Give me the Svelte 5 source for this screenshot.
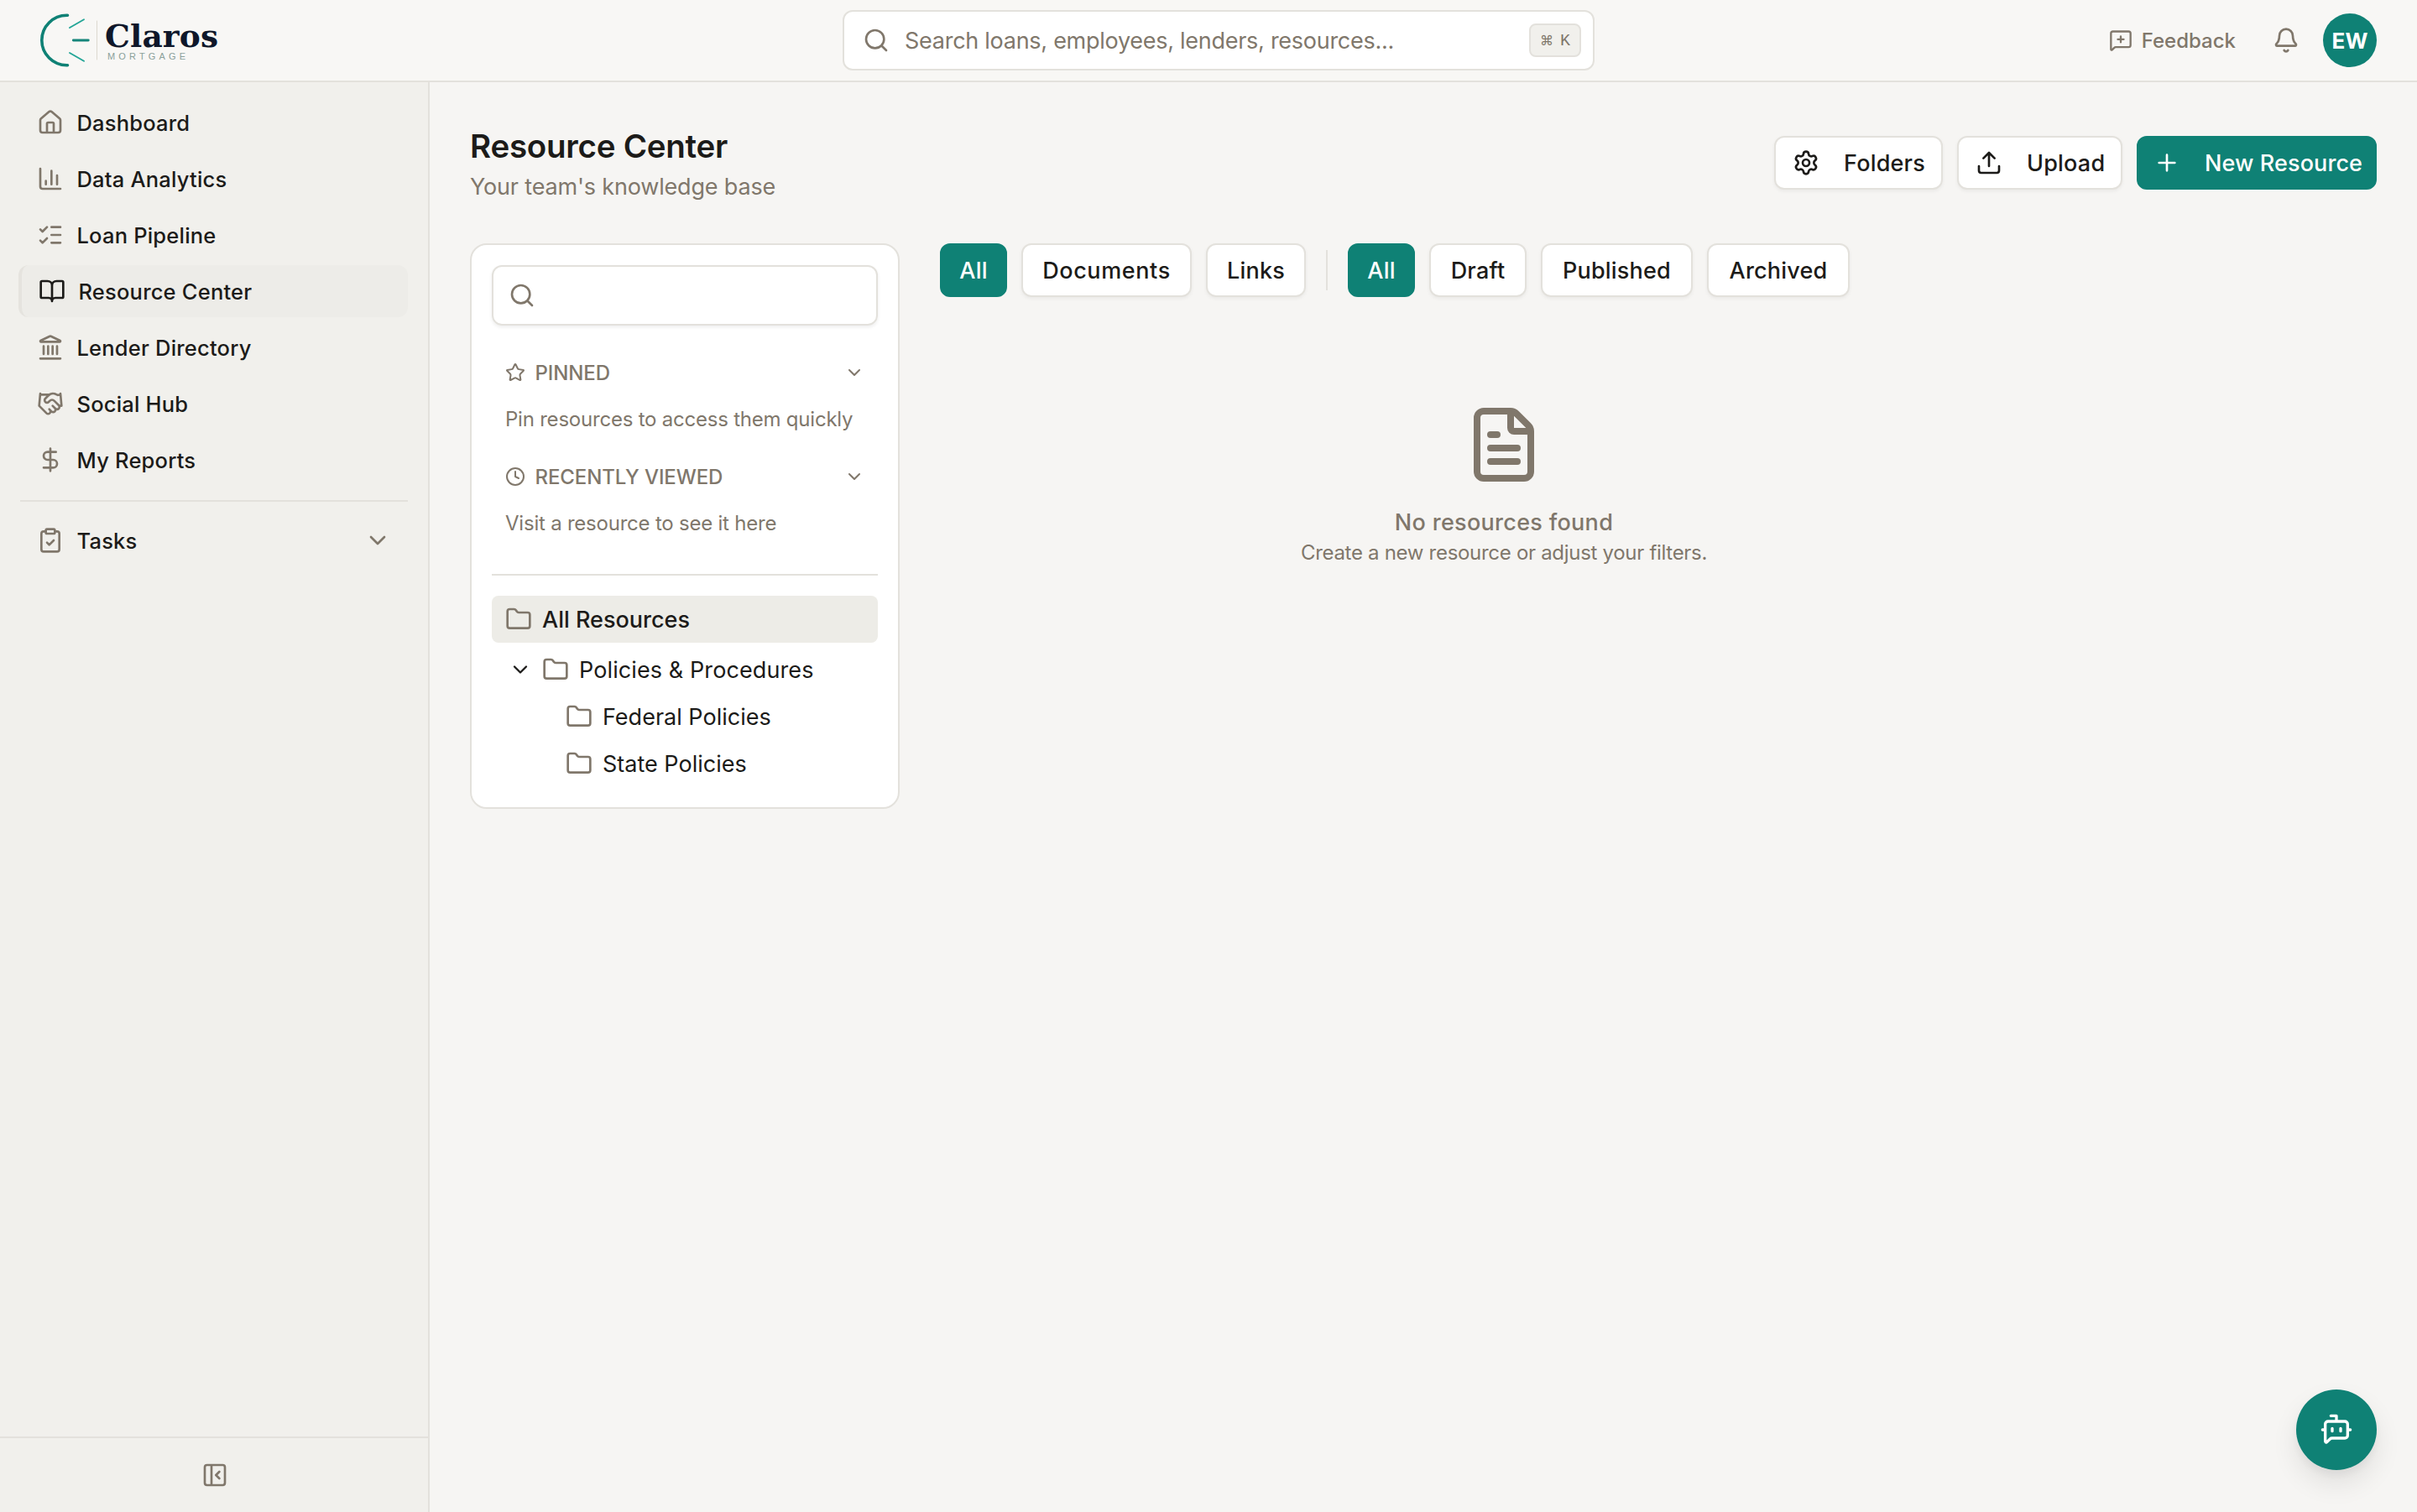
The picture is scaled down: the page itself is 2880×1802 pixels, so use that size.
<script>
  const icons = {
    home: 'M15 21v-8a1 1 0 0 0-1-1h-4a1 1 0 0 0-1 1v8M3 10a2 2 0 0 1 .709-1.528l7-5.999a2 2 0 0 1 2.582 0l7 5.999A2 2 0 0 1 21 10v9a2 2 0 0 1-2 2H5a2 2 0 0 1-2-2z',
    chart: 'M3 3v16a2 2 0 0 0 2 2h16M18 17V9M13 17V5M8 17v-3',
    checks: 'M13 5h8M13 12h8M13 19h8M3 17l2 2 4-4M3 7l2 2 4-4',
    book: 'M12 7v14M3 18a1 1 0 0 1-1-1V4a1 1 0 0 1 1-1h5a4 4 0 0 1 4 4 4 4 0 0 1 4-4h5a1 1 0 0 1 1 1v13a1 1 0 0 1-1 1h-6a3 3 0 0 0-3 3 3 3 0 0 0-3-3z',
    landmark: 'M10 18v-7M11.119 2.205a2 2 0 0 1 1.762 0l7.84 3.846A.5.5 0 0 1 20.5 7h-17a.5.5 0 0 1-.22-.949zM14 18v-7M18 18v-7M3 22h18M6 18v-7',
    handshake: 'M11 17l2 2a1 1 0 1 0 3-3M14 14l2.5 2.5a1 1 0 1 0 3-3l-3.88-3.88a3 3 0 0 0-4.24 0l-.88.88a1 1 0 1 1-3-3l2.81-2.81a5.79 5.79 0 0 1 7.06-.87l.47.28a2 2 0 0 0 1.42.25L21 4M21 3l1 11h-2M3 3L2 14l6.5 6.5a1 1 0 1 0 3-3M3 4h8',
    dollar: 'M12 2v20M17 5H9.5a3.5 3.5 0 0 0 0 7h5a3.5 3.5 0 0 1 0 7H6',
    clipboard: 'M9 2h6a1 1 0 0 1 1 1v2a1 1 0 0 1-1 1H9a1 1 0 0 1-1-1V3a1 1 0 0 1 1-1zM16 4h2a2 2 0 0 1 2 2v14a2 2 0 0 1-2 2H6a2 2 0 0 1-2-2V6a2 2 0 0 1 2-2h2M9 14l2 2 4-4',
    chevron: 'M6 9l6 6 6-6',
    panel: 'M5 3h14a2 2 0 0 1 2 2v14a2 2 0 0 1-2 2H5a2 2 0 0 1-2-2V5a2 2 0 0 1 2-2zM9 3v18M16 15l-3-3 3-3',
    search: 'M21 21l-4.34-4.34M11 3a8 8 0 1 0 0 16a8 8 0 1 0 0-16z',
    feedback: 'M22 17a2 2 0 0 1-2 2H6.828a2 2 0 0 0-1.414.586l-2.202 2.202A.71.71 0 0 1 2 21.286V5a2 2 0 0 1 2-2h16a2 2 0 0 1 2 2zM12 8v6M9 11h6',
    bell: 'M10.268 21a2 2 0 0 0 3.464 0M3.262 15.326A1 1 0 0 0 4 17h16a1 1 0 0 0 .74-1.673C19.41 13.956 18 12.499 18 8A6 6 0 0 0 6 8c0 4.499-1.411 5.956-2.738 7.326',
    settings: 'M9.671 4.136a2.34 2.34 0 0 1 4.659 0 2.34 2.34 0 0 0 3.319 1.915 2.34 2.34 0 0 1 2.33 4.033 2.34 2.34 0 0 0 0 3.831 2.34 2.34 0 0 1-2.33 4.033 2.34 2.34 0 0 0-3.319 1.915 2.34 2.34 0 0 1-4.659 0 2.34 2.34 0 0 0-3.32-1.915 2.34 2.34 0 0 1-2.33-4.033 2.34 2.34 0 0 0 0-3.831A2.34 2.34 0 0 1 6.35 6.051a2.34 2.34 0 0 0 3.319-1.915M12 9a3 3 0 1 0 0 6a3 3 0 1 0 0-6z',
    upload: 'M12 3v12M17 8l-5-5-5 5M21 15v4a2 2 0 0 1-2 2H5a2 2 0 0 1-2-2v-4',
    plus: 'M5 12h14M12 5v14',
    star: 'M11.525 2.295a.53.53 0 0 1 .95 0l2.31 4.679a2.123 2.123 0 0 0 1.595 1.16l5.166.756a.53.53 0 0 1 .294.904l-3.736 3.638a2.123 2.123 0 0 0-.611 1.878l.882 5.14a.53.53 0 0 1-.771.56l-4.618-2.428a2.122 2.122 0 0 0-1.973 0L6.396 21.01a.53.53 0 0 1-.77-.56l.881-5.139a2.122 2.122 0 0 0-.611-1.879L2.16 9.795a.53.53 0 0 1 .294-.906l5.165-.755a2.122 2.122 0 0 0 1.597-1.16z',
    clock: 'M12 2a10 10 0 1 0 0 20a10 10 0 1 0 0-20zM12 6v6l4 2',
    folder: 'M20 20a2 2 0 0 0 2-2V8a2 2 0 0 0-2-2h-7.9a2 2 0 0 1-1.69-.9L9.6 3.9A2 2 0 0 0 7.93 3H4a2 2 0 0 0-2 2v13a2 2 0 0 0 2 2Z',
    file: 'M6 22a2 2 0 0 1-2-2V4a2 2 0 0 1 2-2h8a2.4 2.4 0 0 1 1.704.706l3.588 3.588A2.4 2.4 0 0 1 20 8v12a2 2 0 0 1-2 2zM14 2v5a1 1 0 0 0 1 1h5M10 9H8M16 13H8M16 17H8',
    bot: 'M12 6V2H8M15 11v2M2 12h2M20 12h2M20 16a2 2 0 0 1-2 2H8.828a2 2 0 0 0-1.414.586l-2.202 2.202A.71.71 0 0 1 4 20.286V8a2 2 0 0 1 2-2h12a2 2 0 0 1 2 2zM9 11v2'
  };

  const navItems = [
    { label: 'Dashboard', icon: 'home' },
    { label: 'Data Analytics', icon: 'chart' },
    { label: 'Loan Pipeline', icon: 'checks' },
    { label: 'Resource Center', icon: 'book' },
    { label: 'Lender Directory', icon: 'landmark' },
    { label: 'Social Hub', icon: 'handshake' },
    { label: 'My Reports', icon: 'dollar' }
  ];

  const typeFilters = ['All', 'Documents', 'Links'];
  const statusFilters = ['All', 'Draft', 'Published', 'Archived'];

  let activeNav = $state('Resource Center');
  let activeType = $state('All');
  let activeStatus = $state('All');
  let policiesOpen = $state(true);
</script>

{#snippet icon(name, size = 32)}
  <svg class="icon" width={size} height={size} viewBox="0 0 24 24" aria-hidden="true">
    <path d={icons[name]} />
  </svg>
{/snippet}

<div class="app">
  <header class="topbar">
    <svg class="logo" width="230" height="72" viewBox="0 0 230 72" role="img" aria-label="Claros Mortgage">
      <path class="arc" d="M40.5 6.3h-1a29.7 29.7 0 0 0 0 59.4h1" />
      <path class="ray" d="M43 21l17-9.8M43 51l17 9.8" />
      <path class="ray mid" d="M47.3 36h18" />
      <path class="rule" d="M75.5 13v46" />
      <text class="brand" x="85" y="44" textLength="135">Claros</text>
      <text class="brand-sub" x="88" y="59" textLength="93">MORTGAGE</text>
    </svg>

    <div class="global-search">
      {@render icon('search')}
      <span class="placeholder">Search loans, employees, lenders, resources...</span>
      <kbd><span class="cmd">⌘</span><span>K</span></kbd>
    </div>

    <div class="user-area">
      <button class="feedback">
        {@render icon('feedback', 28)}
        <span>Feedback</span>
      </button>
      <button class="bell" aria-label="Notifications">{@render icon('bell')}</button>
      <div class="avatar">EW</div>
    </div>
  </header>

  <div class="body">
    <aside class="sidebar">
      <nav>
        {#each navItems as item}
          <button class="nav-item" class:active={activeNav === item.label} onclick={() => (activeNav = item.label)}>
            {@render icon(item.icon)}
            <span>{item.label}</span>
          </button>
        {/each}
        <hr />
        <button class="nav-item">
          {@render icon('clipboard')}
          <span class="grow">Tasks</span>
          {@render icon('chevron')}
        </button>
      </nav>
      <div class="sidebar-footer">
        <button aria-label="Collapse sidebar">{@render icon('panel')}</button>
      </div>
    </aside>

    <main>
      <div class="page-head">
        <div>
          <h1>Resource Center</h1>
          <p>Your team's knowledge base</p>
        </div>
        <div class="actions">
          <button class="btn folders">{@render icon('settings')}<span>Folders</span></button>
          <button class="btn upload">{@render icon('upload')}<span>Upload</span></button>
          <button class="btn primary create">{@render icon('plus')}<span>New Resource</span></button>
        </div>
      </div>

      <div class="columns">
        <section class="card">
          <div class="card-search">{@render icon('search')}</div>

          <div class="group">
            <div class="group-head">
              {@render icon('star', 24)}
              <span class="grow">PINNED</span>
              {@render icon('chevron', 24)}
            </div>
            <p>Pin resources to access them quickly</p>
          </div>
          <div class="group">
            <div class="group-head">
              {@render icon('clock', 24)}
              <span class="grow">RECENTLY VIEWED</span>
              {@render icon('chevron', 24)}
            </div>
            <p>Visit a resource to see it here</p>
          </div>

          <div class="tree">
            <div class="folder selected">{@render icon('folder')}<span>All Resources</span></div>
            <div class="folder parent">
              <button class="toggle" aria-label="Toggle folder" onclick={() => (policiesOpen = !policiesOpen)}>
                {@render icon('chevron', 28)}
              </button>
              {@render icon('folder')}
              <span>Policies &amp; Procedures</span>
            </div>
            {#if policiesOpen}
              <div class="folder child">{@render icon('folder')}<span>Federal Policies</span></div>
              <div class="folder child">{@render icon('folder')}<span>State Policies</span></div>
            {/if}
          </div>
        </section>

        <section class="results">
          <div class="filters">
            {#each typeFilters as f}
              <button class="btn chip {f.toLowerCase()}" class:primary={activeType === f} onclick={() => (activeType = f)}>{f}</button>
            {/each}
            <span class="sep"></span>
            {#each statusFilters as f}
              <button class="btn chip {f.toLowerCase()}" class:primary={activeStatus === f} onclick={() => (activeStatus = f)}>{f}</button>
            {/each}
          </div>
          <div class="empty">
            {@render icon('file', 96)}
            <h2>No resources found</h2>
            <p>Create a new resource or adjust your filters.</p>
          </div>
        </section>
      </div>
    </main>
  </div>

  <button class="fab" aria-label="Open assistant">{@render icon('bot', 40)}</button>
</div>

<style>
  :global(body) {
    margin: 0;
    background: #f6f5f3;
  }

  .app {
    --ink: #1c1b19;
    --muted: #80776b;
    --line: #e3e1dc;
    --teal: #0f8175;
    display: flex;
    flex-direction: column;
    width: 2880px;
    height: 1802px;
    overflow: hidden;
    background: #f6f5f3;
    color: var(--ink);
    font-family: Inter, 'Open Sans', sans-serif;
    font-size: 27px;
  }

  .app * {
    box-sizing: border-box;
  }

  button {
    margin: 0;
    padding: 0;
    border: none;
    background: none;
    color: inherit;
    font: inherit;
    letter-spacing: inherit;
    cursor: pointer;
  }

  h1,
  h2,
  p {
    margin: 0;
  }

  .icon {
    display: block;
    flex: none;
    fill: none;
    stroke: currentColor;
    stroke-width: 2;
    stroke-linecap: round;
    stroke-linejoin: round;
  }

  .grow {
    flex: 1;
    text-align: left;
  }

  /* Top bar */
  .topbar {
    display: grid;
    grid-template-columns: 964px 896px 1fr;
    align-items: center;
    flex: none;
    height: 98px;
    padding: 0 48px 0 40px;
    border-bottom: 2px solid var(--line);
    background: #f8f7f5;
  }

  .logo {
    display: block;
  }

  .logo path {
    fill: none;
    stroke-linecap: round;
  }

  .logo .arc {
    stroke: #0f8175;
    stroke-width: 3.6;
  }

  .logo .ray {
    stroke: #22a596;
    stroke-width: 1.9;
  }

  .logo .mid {
    stroke: #15857a;
    stroke-width: 2.8;
  }

  .logo .rule {
    stroke: #ddd9d0;
    stroke-width: 1;
  }

  .brand {
    font-family: 'DejaVu Serif', serif;
    font-size: 37.5px;
    font-weight: 700;
    fill: #0f172a;
  }

  .brand-sub {
    font-family: 'Liberation Sans', sans-serif;
    font-size: 11px;
    fill: #8aa09a;
  }

  .global-search {
    display: flex;
    align-items: center;
    height: 72px;
    padding: 0 14px 0 22px;
    border: 2px solid var(--line);
    border-radius: 12px;
    background: #fff;
    color: var(--muted);
  }

  .placeholder {
    flex: 1;
    margin-left: 18px;
    white-space: nowrap;
    letter-spacing: -0.27px;
  }

  kbd {
    display: flex;
    align-items: center;
    justify-content: center;
    gap: 8px;
    width: 62px;
    height: 40px;
    border: 2px solid var(--line);
    border-radius: 8px;
    background: #f1f0ec;
    font-family: 'Liberation Mono', monospace;
    font-size: 20px;
  }

  .cmd {
    font-family: 'DejaVu Sans', sans-serif;
    font-size: 16px;
  }

  .user-area {
    display: flex;
    align-items: center;
    justify-content: flex-end;
    color: var(--muted);
  }

  .feedback {
    display: flex;
    align-items: center;
    gap: 11px;
    margin-right: 44px;
    font-size: 24px;
    font-weight: 450;
  }

  .bell {
    margin-right: 28px;
  }

  .avatar {
    display: flex;
    align-items: center;
    justify-content: center;
    width: 64px;
    height: 64px;
    border-radius: 50%;
    background: var(--teal);
    color: #fff;
    font-size: 26px;
    font-weight: 700;
  }

  /* Sidebar */
  .body {
    display: flex;
    flex: 1;
    min-height: 0;
  }

  .sidebar {
    display: flex;
    flex-direction: column;
    flex: none;
    width: 512px;
    border-right: 2px solid var(--line);
    background: #f1f0ec;
  }

  nav {
    display: flex;
    flex: 1;
    flex-direction: column;
    gap: 5px;
    padding: 17px 24px;
  }

  .nav-item {
    display: flex;
    align-items: center;
    gap: 15.5px;
    height: 62px;
    padding: 0 20px;
    border-radius: 12px;
    font-size: 25.5px;
    font-weight: 450;
    letter-spacing: 0.2px;
  }

  .nav-item .icon {
    color: var(--muted);
  }

  .nav-item.active {
    margin-left: -2px;
    border-left: 4px solid #e5e3de;
    background: #edece8;
  }

  .nav-item.active .icon {
    color: var(--ink);
  }

  nav hr {
    width: 100%;
    height: 2px;
    margin: 12px 0 10px;
    border: none;
    background: var(--line);
  }

  .sidebar-footer {
    display: flex;
    align-items: center;
    justify-content: center;
    height: 90px;
    padding-left: 2px;
    border-top: 2px solid var(--line);
    color: var(--muted);
  }

  /* Page heading */
  main {
    flex: 1;
    padding: 50px 48px 0;
  }

  .page-head {
    display: flex;
    justify-content: space-between;
    height: 142px;
  }

  h1 {
    font-size: 38.5px;
    font-weight: 600;
    line-height: 52px;
    letter-spacing: -0.25px;
  }

  .page-head p {
    color: var(--muted);
    line-height: 46px;
    letter-spacing: -0.18px;
  }

  .actions {
    display: flex;
    gap: 17px;
    padding-top: 14px;
  }

  .btn {
    display: flex;
    align-items: center;
    flex: none;
    height: 64px;
    border: 2px solid var(--line);
    border-radius: 12px;
    background: #fff;
    box-shadow: 0 2px 4px rgba(0, 0, 0, 0.05);
    font-weight: 450;
    letter-spacing: 0.2px;
    white-space: nowrap;
  }

  .btn.primary {
    border-color: var(--teal);
    background: var(--teal);
    box-shadow: none;
    color: #fff;
  }

  .actions .btn {
    gap: 29px;
    padding-left: 20px;
  }

  .folders {
    width: 201px;
  }

  .upload {
    width: 197px;
  }

  .actions .create {
    width: 286px;
    padding-left: 18px;
    letter-spacing: 0.1px;
  }

  /* Folder card */
  .columns {
    display: flex;
    align-items: flex-start;
    gap: 48px;
  }

  .card {
    flex: none;
    width: 512px;
    height: 674px;
    padding: 24px;
    border: 2px solid var(--line);
    border-radius: 20px;
    background: #fff;
  }

  .card-search {
    display: flex;
    align-items: center;
    height: 72px;
    margin-bottom: 32px;
    padding-left: 18px;
    border: 2px solid var(--line);
    border-radius: 12px;
    box-shadow: 0 2px 4px rgba(0, 0, 0, 0.07);
    color: var(--muted);
  }

  .group {
    height: 124px;
    padding: 0 16px;
    color: var(--muted);
    font-size: 24px;
    letter-spacing: -0.22px;
  }

  .group-head {
    display: flex;
    align-items: center;
    gap: 11.5px;
    height: 48px;
    font-weight: 450;
    letter-spacing: -0.1px;
  }

  .group p {
    line-height: 64px;
    white-space: nowrap;
  }

  .tree {
    margin-top: 16px;
    padding-top: 24px;
    border-top: 2px solid var(--line);
  }

  .folder {
    display: flex;
    align-items: center;
    gap: 12px;
    height: 56px;
    padding-left: 16px;
    border-radius: 8px;
    white-space: nowrap;
  }

  .folder .icon {
    color: var(--muted);
  }

  .folder.selected {
    margin-bottom: 4px;
    background: #edece7;
    font-weight: 450;
  }

  .folder.parent {
    padding-left: 20px;
    letter-spacing: 0.1px;
  }

  .folder.child {
    padding-left: 88px;
  }

  .folder .toggle .icon {
    color: var(--ink);
  }

  /* Filters and empty state */
  .results {
    flex: 1;
  }

  .filters {
    display: flex;
    align-items: center;
    gap: 17px;
  }

  .chip {
    justify-content: center;
  }

  .chip.all {
    width: 80px;
  }

  .chip.documents {
    width: 203px;
    letter-spacing: 0.6px;
  }

  .chip.links {
    width: 119px;
  }

  .chip.draft {
    width: 116px;
  }

  .chip.published {
    width: 181px;
  }

  .chip.archived {
    width: 170px;
  }

  .sep {
    width: 2px;
    height: 48px;
    margin: 0 7px;
    background: var(--line);
  }

  .empty {
    display: flex;
    flex-direction: column;
    align-items: center;
    width: 1344px;
    padding-top: 128px;
    color: var(--muted);
  }

  .empty h2 {
    margin-top: 25px;
    font-size: 27px;
    font-weight: 450;
    line-height: 40px;
    letter-spacing: 0.3px;
  }

  .empty p {
    font-size: 24px;
    line-height: 31px;
    letter-spacing: -0.3px;
  }

  .fab {
    position: fixed;
    right: 48px;
    bottom: 50px;
    display: flex;
    align-items: center;
    justify-content: center;
    width: 96px;
    height: 96px;
    border-radius: 50%;
    background: var(--teal);
    box-shadow: 0 16px 32px rgba(0, 0, 0, 0.09), 0 6px 12px rgba(0, 0, 0, 0.05);
    color: #fff;
  }
</style>
